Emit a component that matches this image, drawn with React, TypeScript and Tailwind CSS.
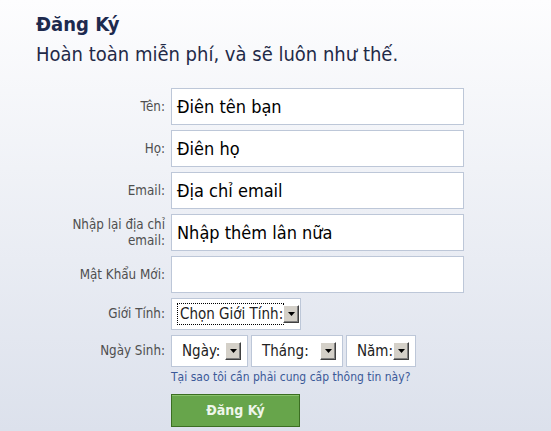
import React from 'react';

const font = { fontFamily: '"DejaVu Sans Condensed", "DejaVu Sans", sans-serif' };

const ArrowBtn = () => (
  <span className="flex h-[18px] w-[16px] shrink-0 items-center justify-center border border-t-[#fff] border-l-[#fff] border-r-[#404040] border-b-[#404040] bg-[#d4d0c8] shadow-[inset_-1px_-1px_0_#808080]">
    <svg width="7" height="4" viewBox="0 0 7 4">
      <path d="M0 0h7L3.5 4z" fill="#000" />
    </svg>
  </span>
);

interface SelectProps {
  label: string;
  width: string;
  focused?: boolean;
}

const FakeSelect: React.FC<SelectProps> = ({ label, width, focused }) => (
  <div className={`flex h-[32px] ${width} items-center border border-[#bdc7d8] bg-white pl-[6px] pr-[6px]`}>
    <span
      className={`flex flex-1 items-center whitespace-nowrap text-[15px] leading-none text-[#222] ${
        focused ? 'h-[20px] outline outline-1 outline-dotted outline-black pl-[2px]' : 'pl-[4px]'
      }`}
    >
      {label}
    </span>
    <ArrowBtn />
  </div>
);

const Row: React.FC<{ label: React.ReactNode; children: React.ReactNode }> = ({ label, children }) => (
  <div className="flex items-center">
    <div className="w-[130px] pr-[1px] text-right text-[13.3px] leading-[16px] text-[#4f4f4f]">{label}</div>
    <div className="ml-[5px]">{children}</div>
  </div>
);

const TextField: React.FC<{ value: string }> = ({ value }) => (
  <div className="flex h-[37px] w-[293px] items-center border border-[#bdc7d8] bg-white pl-[5px] text-[18px] text-black">
    {value}
  </div>
);

export default function App() {
  return (
    <div
      className="h-[431px] w-[551px] overflow-hidden bg-gradient-to-b from-[#fdfdfe] to-[#dce1ec] pl-[36px] pt-[12px]"
      style={font}
    >
      <h1 className="text-[20px] font-bold leading-[24px] text-[#1d2a4e]">Đăng Ký</h1>
      <p className="mt-[6px] text-[20px] leading-[24px] text-[#1f2a48]">Hoàn toàn miễn phí, và sẽ luôn như thế.</p>

      <div className="mt-[22px] flex flex-col gap-[5px]">
        <Row label="Tên:">
          <TextField value="Điên tên bạn" />
        </Row>
        <Row label="Họ:">
          <TextField value="Điên họ" />
        </Row>
        <Row label="Email:">
          <TextField value="Địa chỉ email" />
        </Row>
        <Row label={<>Nhập lại địa chỉ<br />email:</>}>
          <TextField value="Nhập thêm lân nữa" />
        </Row>
        <Row label="Mật Khẩu Mới:">
          <TextField value="" />
        </Row>
        <Row label="Giới Tính:">
          <FakeSelect label="Chọn Giới Tính:" width="w-[130px]" focused />
        </Row>
        <Row label="Ngày Sinh:">
          <div className="flex gap-[3px]">
            <FakeSelect label="Ngày:" width="w-[77px]" />
            <FakeSelect label="Tháng:" width="w-[92px]" />
            <FakeSelect label="Năm:" width="w-[70px]" />
          </div>
        </Row>
      </div>

      <div className="ml-[135px]">
        <a href="#" className="mt-[2px] block text-[12px] leading-[16px] text-[#3b5998]">
          Tại sao tôi cần phải cung cấp thông tin này?
        </a>
        <button className="mt-[9px] h-[33px] w-[129px] border border-[#3b6e22] bg-[#67a54b] text-[14px] font-bold text-[#eef6ea] shadow-[inset_0_1px_0_#8ac26c]">
          Đăng Ký
        </button>
      </div>
    </div>
  );
}
